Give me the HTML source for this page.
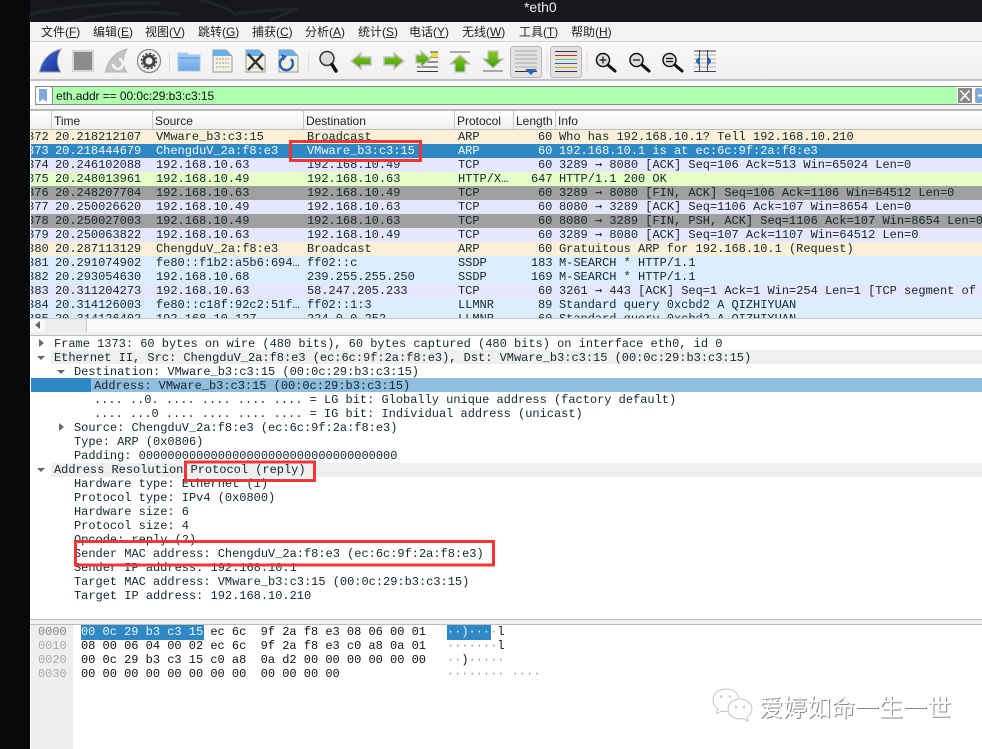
<!DOCTYPE html>
<html><head><meta charset="utf-8"><style>
html,body{margin:0;padding:0;background:#fff}
#w{position:relative;width:982px;height:749px;overflow:hidden;background:#fff;font-family:"Liberation Mono",monospace;font-size:12px;color:#12272e;letter-spacing:-.014px}
.a{position:absolute}
.t{position:absolute;white-space:pre;line-height:14px;height:14px}
.m{position:absolute;top:24px;font:12px/16px "Liberation Sans","Noto Sans CJK SC",sans-serif;color:#222;white-space:pre}
.h{position:absolute;top:111px;height:18px;font:12px/20px "Liberation Sans",sans-serif;color:#222;border-right:1px solid #c8c8c8;box-sizing:border-box;padding-left:2px;white-space:pre}
.r{position:absolute;left:31px;width:951px;height:14px;overflow:hidden}
.r span{position:absolute;top:0;line-height:14px;white-space:pre}
.r b{font:12px/1px "DejaVu Sans Mono",monospace}
svg{position:absolute;overflow:visible}
u{text-decoration:underline}
</style></head><body><div id="w">
<div class="a" style="left:0;top:0;width:30px;height:749px;background:#08090b"></div>
<div class="a" style="left:30px;top:0;width:952px;height:22px;background:#16181d"></div>
<svg style="left:30px;top:0" width="300" height="22"><path d="M0 14Q60 2 130 3M170 0Q195 6 205 14Q235 10 268 9L240 20M40 22Q90 8 150 14" fill="none" stroke="#21242a" stroke-width="3"/></svg>
<div class="t" style="left:524px;top:0;font:14px/15px 'Liberation Sans',sans-serif;color:#eee">*eth0</div>
<div class="a" style="left:30px;top:22px;width:952px;height:20px;background:#f3f3f3;border-bottom:1px solid #d2d2d2;box-sizing:border-box"></div>
<div class="m" style="left:41px">文件(<u>F</u>)</div><div class="m" style="left:93px">编辑(<u>E</u>)</div><div class="m" style="left:145px">视图(<u>V</u>)</div><div class="m" style="left:198px">跳转(<u>G</u>)</div><div class="m" style="left:252px">捕获(<u>C</u>)</div><div class="m" style="left:305px">分析(<u>A</u>)</div><div class="m" style="left:358px">统计(<u>S</u>)</div><div class="m" style="left:409px">电话(<u>Y</u>)</div><div class="m" style="left:462px">无线(<u>W</u>)</div><div class="m" style="left:519px">工具(<u>T</u>)</div><div class="m" style="left:571px">帮助(<u>H</u>)</div>
<div class="a" style="left:30px;top:42px;width:952px;height:39px;background:linear-gradient(#f8f8f8,#f0f0f0);border-bottom:2px solid #c2c2c2;box-sizing:border-box"></div>
<svg style="left:0;top:0" width="982" height="85" fill="none">
<defs><linearGradient id="g" x1="0" y1="0" x2="0" y2="1"><stop offset="0" stop-color="#8ccb28"/><stop offset="1" stop-color="#3d9a08"/></linearGradient>
<linearGradient id="f" x1="0" y1="0" x2="0" y2="1"><stop offset="0" stop-color="#a4cdf5"/><stop offset="1" stop-color="#6aa6e4"/></linearGradient>
<linearGradient id="b" x1="0" y1="0" x2="1" y2="1"><stop offset="0" stop-color="#3c6fd8"/><stop offset="1" stop-color="#1a2f95"/></linearGradient></defs>
<path d="M39.5 72Q43 54 61 49Q54 60 60.5 72Z" fill="url(#b)" stroke="#9aa0b0"/>
<rect x="73" y="51" width="20" height="20" fill="#8c8c8c" stroke="#d6d6d6" stroke-width="2"/>
<path d="M105.5 72Q109 54 127 49Q120 60 126.500 72Z" fill="#c4c4c4" stroke="#b4b4b4"/><path d="M119 59a5 5 0 1 1-6 5" stroke="#f6f6f6" stroke-width="2.500"/>
<circle cx="149" cy="61" r="11.500" fill="#f4f4f4" stroke="#8a8a8a" stroke-width="1.300"/><circle cx="149" cy="61" r="5" stroke="#444" stroke-width="3"/><circle cx="149" cy="61" r="7.500" stroke="#444" stroke-width="1.500" stroke-dasharray="2.400 1.500"/>
<path d="M169.500 52V71M308.500 52V71" stroke="#dcdcdc"/>
<path d="M178 71V53H187L189 55H200V71Z" fill="url(#f)" stroke="#a8c8e8"/><path d="M178 58H200" stroke="#5a96d8"/>
<path d="M213 50H226L232 56V72H213Z" fill="#f4f2df" stroke="#999"/><path d="M213 50H226L232 56H213Z" fill="#6ab0e6"/><path d="M216 59H229M216 63H229M216 67H229" stroke="#999" stroke-dasharray="2 1"/>
<path d="M246 50H259L265 56V72H246Z" fill="#f4f2df" stroke="#999"/><path d="M246 50H259L265 56H246Z" fill="#6ab0e6"/><path d="M249 68H262" stroke="#999" stroke-dasharray="2 1"/><path d="M248 54L263 70M263 54L248 70" stroke="#333" stroke-width="2.500"/>
<path d="M279 50H292L298 56V72H279Z" fill="#f4f2df" stroke="#999"/><path d="M279 50H292L298 56H279Z" fill="#6ab0e6"/><path d="M291 59A6.500 6.500 0 1 1 283 58" stroke="#2a62b8" stroke-width="2.500"/><path d="M281 54L287 56L283 61Z" fill="#2a62b8"/>
<circle cx="327" cy="58.500" r="7" fill="#dcdcdc" stroke="#333" stroke-width="1.500"/><path d="M332 64.500L336 71" stroke="#111" stroke-width="3.500" stroke-linecap="round"/>
<path d="M351 61L361 53V57H371V65H361V69Z" fill="url(#g)" stroke="#c4c4c4" stroke-width="1.500"/>
<path d="M404 61L394 53V57H384V65H394V69Z" fill="url(#g)" stroke="#c4c4c4" stroke-width="1.500"/>
<path d="M430 52H438M430 57H438M417 62H438M417 67H438M417 71.500H438" stroke="#333"/><rect x="431" y="53" width="7" height="4" fill="#f6dc3c"/><path d="M430 59L421 51V55H416V63H421V67Z" fill="url(#g)" stroke="#c4c4c4" stroke-width="1.200"/>
<path d="M450 52H470" stroke="#aaa" stroke-width="2"/><path d="M460 55L470 64H465V72H455V64H450Z" fill="url(#g)" stroke="#c4c4c4" stroke-width="1.200"/>
<path d="M483 71H503" stroke="#aaa" stroke-width="2"/><path d="M493 68L503 59H498V51H488V59H483Z" fill="url(#g)" stroke="#c4c4c4" stroke-width="1.200"/>
<rect x="510.500" y="46.500" width="31" height="31" rx="3" fill="#e2e2e2" stroke="#b8b8b8"/><path d="M515 51H537M515 55H537M515 59H537M515 63H537M515 67H537" stroke="#aaa"/><path d="M515 71.500H537" stroke="#333"/><path d="M525 69H537L531 75Z" fill="#2a66b4"/>
<rect x="550.500" y="46.500" width="31" height="31" rx="3" fill="#e2e2e2" stroke="#b8b8b8"/><path d="M555 51.500H577" stroke="#333"/><path d="M555 55.500H577" stroke="#d42a2a"/><path d="M555 59.500H577" stroke="#78c030"/><path d="M555 63.500H577" stroke="#3060c0"/><path d="M555 67.500H577" stroke="#d0a010"/><path d="M555 71.500H577" stroke="#333"/>
<path d="M547 53V72M587 53V72" stroke="#dcdcdc"/>
<g stroke="#111" fill="#ddd"><circle cx="603" cy="60" r="6.500" stroke-width="1.500"/><circle cx="636.500" cy="60" r="6.500" stroke-width="1.500"/><circle cx="669.500" cy="60" r="6.500" stroke-width="1.500"/></g>
<path d="M608 65L615 71M642 65L649 71M675 65L682 71" stroke="#111" stroke-width="3" stroke-linecap="round"/>
<path d="M599.500 60H606.500M603 56.500V63.500M633 60H640M666 58.500H673M666 61.500H673" stroke="#111" stroke-width="1.200"/>
<path d="M694 51H716M694 55H716M694 59H716M694 63H716M694 67H716M694 71.500H716" stroke="#b0b0b0"/><path d="M694 51H716M694 71.500H716M699.500 50V72M707.500 50V72" stroke="#444"/><path d="M696 60L700 56V66L696 62ZM711 60L707.500 56V66L711 62Z" fill="#2a66b4"/>
</svg>
<div class="a" style="left:35px;top:86px;width:947px;height:19px;background:#afffaf;border-top:1px solid #8a8a8a;border-bottom:1px solid #8a8a8a;box-sizing:border-box"></div>
<div class="a" style="left:35px;top:86px;width:18px;height:19px;background:#fff;border:1px solid #8a8a8a;border-radius:3px;box-sizing:border-box"></div>
<svg style="left:39px;top:89px" width="10" height="14"><path d="M0 0H8V13L4 10L0 13Z" fill="#7fa9d8"/></svg>
<div class="t" style="left:56px;top:88px;font:12px/16px 'Liberation Sans',sans-serif;color:#111;height:16px;letter-spacing:-.07px">eth.addr == 00:0c:29:b3:c3:15</div>
<div class="a" style="left:957px;top:87px;width:25px;height:17px;background:#fff"></div>
<svg style="left:958px;top:88px" width="24" height="15"><rect width="14" height="15" fill="#8a8a8a"/><path d="M2.500 2.500L11.500 12.500M11.500 2.500L2.500 12.500" stroke="#fff" stroke-width="1.500"/><rect x="17" width="7" height="15" rx="2" fill="#7fa9d8"/><path d="M20 7.500H24" stroke="#fff" stroke-width="2"/></svg>
<div class="a" style="left:30px;top:105px;width:952px;height:5px;background:#f3f3f3"></div>
<div class="a" style="left:30px;top:109px;width:952px;height:2px;background:#b8b8b8"></div>
<div class="a" style="left:30px;top:111px;width:952px;height:18px;background:linear-gradient(#fff,#efefef)"></div>
<div class="h" style="left:31px;width:21px"></div><div class="h" style="left:52px;width:101px">Time</div><div class="h" style="left:153px;width:151px">Source</div><div class="h" style="left:304px;width:151px">Destination</div><div class="h" style="left:455px;width:59px">Protocol</div><div class="h" style="left:514px;width:42px">Length</div><div class="h" style="left:556px;width:426px;border:0">Info</div>
<div class="a" style="left:30px;top:129px;width:952px;height:1px;background:#bdbdbd"></div>
<div class="r" style="top:130px;background:#faf0d7"><span style="left:-11px">1372</span><span style="left:24px">20.218212107</span><span style="left:125px">VMware_b3:c3:15</span><span style="left:276px">Broadcast</span><span style="left:427px">ARP</span><span style="left:507px">60</span><span style="left:528px">Who has 192.168.10.1? Tell 192.168.10.210</span></div>
<div class="r" style="top:144px;background:#2e88c4;color:#f4f8fc"><span style="left:-11px">1373</span><span style="left:24px">20.218444679</span><span style="left:125px">ChengduV_2a:f8:e3</span><span style="left:276px">VMware_b3:c3:15</span><span style="left:427px">ARP</span><span style="left:507px">60</span><span style="left:528px">192.168.10.1 is at ec:6c:9f:2a:f8:e3</span></div>
<div class="r" style="top:158px;background:#e7e6ff"><span style="left:-11px">1374</span><span style="left:24px">20.246102088</span><span style="left:125px">192.168.10.63</span><span style="left:276px">192.168.10.49</span><span style="left:427px">TCP</span><span style="left:507px">60</span><span style="left:528px">3289 <b>→</b> 8080 [ACK] Seq=106 Ack=513 Win=65024 Len=0</span></div>
<div class="r" style="top:172px;background:#e4ffc7"><span style="left:-11px">1375</span><span style="left:24px">20.248013961</span><span style="left:125px">192.168.10.49</span><span style="left:276px">192.168.10.63</span><span style="left:427px">HTTP/X…</span><span style="left:500px">647</span><span style="left:528px">HTTP/1.1 200 OK</span></div>
<div class="r" style="top:186px;background:#a0a0a0"><span style="left:-11px">1376</span><span style="left:24px">20.248207704</span><span style="left:125px">192.168.10.63</span><span style="left:276px">192.168.10.49</span><span style="left:427px">TCP</span><span style="left:507px">60</span><span style="left:528px">3289 <b>→</b> 8080 [FIN, ACK] Seq=106 Ack=1106 Win=64512 Len=0</span></div>
<div class="r" style="top:200px;background:#e7e6ff"><span style="left:-11px">1377</span><span style="left:24px">20.250026620</span><span style="left:125px">192.168.10.49</span><span style="left:276px">192.168.10.63</span><span style="left:427px">TCP</span><span style="left:507px">60</span><span style="left:528px">8080 <b>→</b> 3289 [ACK] Seq=1106 Ack=107 Win=8654 Len=0</span></div>
<div class="r" style="top:214px;background:#a0a0a0"><span style="left:-11px">1378</span><span style="left:24px">20.250027003</span><span style="left:125px">192.168.10.49</span><span style="left:276px">192.168.10.63</span><span style="left:427px">TCP</span><span style="left:507px">60</span><span style="left:528px">8080 <b>→</b> 3289 [FIN, PSH, ACK] Seq=1106 Ack=107 Win=8654 Len=0</span></div>
<div class="r" style="top:228px;background:#e7e6ff"><span style="left:-11px">1379</span><span style="left:24px">20.250063822</span><span style="left:125px">192.168.10.63</span><span style="left:276px">192.168.10.49</span><span style="left:427px">TCP</span><span style="left:507px">60</span><span style="left:528px">3289 <b>→</b> 8080 [ACK] Seq=107 Ack=1107 Win=64512 Len=0</span></div>
<div class="r" style="top:242px;background:#faf0d7"><span style="left:-11px">1380</span><span style="left:24px">20.287113129</span><span style="left:125px">ChengduV_2a:f8:e3</span><span style="left:276px">Broadcast</span><span style="left:427px">ARP</span><span style="left:507px">60</span><span style="left:528px">Gratuitous ARP for 192.168.10.1 (Request)</span></div>
<div class="r" style="top:256px;background:#daeeff"><span style="left:-11px">1381</span><span style="left:24px">20.291074902</span><span style="left:125px">fe80::f1b2:a5b6:694…</span><span style="left:276px">ff02::c</span><span style="left:427px">SSDP</span><span style="left:500px">183</span><span style="left:528px">M-SEARCH * HTTP/1.1</span></div>
<div class="r" style="top:270px;background:#daeeff"><span style="left:-11px">1382</span><span style="left:24px">20.293054630</span><span style="left:125px">192.168.10.68</span><span style="left:276px">239.255.255.250</span><span style="left:427px">SSDP</span><span style="left:500px">169</span><span style="left:528px">M-SEARCH * HTTP/1.1</span></div>
<div class="r" style="top:284px;background:#e7e6ff"><span style="left:-11px">1383</span><span style="left:24px">20.311204273</span><span style="left:125px">192.168.10.63</span><span style="left:276px">58.247.205.233</span><span style="left:427px">TCP</span><span style="left:507px">60</span><span style="left:528px">3261 <b>→</b> 443 [ACK] Seq=1 Ack=1 Win=254 Len=1 [TCP segment of a reassembled PDU]</span></div>
<div class="r" style="top:298px;background:#daeeff"><span style="left:-11px">1384</span><span style="left:24px">20.314126003</span><span style="left:125px">fe80::c18f:92c2:51f…</span><span style="left:276px">ff02::1:3</span><span style="left:427px">LLMNR</span><span style="left:507px">89</span><span style="left:528px">Standard query 0xcbd2 A QIZHIYUAN</span></div>
<div class="r" style="top:312px;height:6px;background:#daeeff"><span style="left:-11px">1385</span><span style="left:24px">20.314126402</span><span style="left:125px">192.168.10.127</span><span style="left:276px">224.0.0.252</span><span style="left:427px">LLMNR</span><span style="left:507px">60</span><span style="left:528px">Standard query 0xcbd2 A QIZHIYUAN</span></div>
<div class="a" style="left:30px;top:318px;width:952px;height:14px;background:#f8f8f8;border-top:1px solid #c8c8c8;box-sizing:border-box"></div>
<div class="a" style="left:45px;top:319px;width:41px;height:13px;background:#ececec;border-right:1px solid #ccc"></div>
<svg style="left:35px;top:321px" width="6" height="9"><path d="M5 0V8L0 4Z" fill="#666"/></svg>
<div class="a" style="left:30px;top:332px;width:952px;height:4px;background:#efefef;border-bottom:1px solid #bdbdbd;box-sizing:border-box"></div>
<div class="a" style="left:51px;top:350px;width:931px;height:14px;background:#efefef"></div>
<div class="a" style="left:51px;top:463px;width:931px;height:14px;background:#efefef"></div>
<div class="a" style="left:31px;top:378px;width:60px;height:14px;background:#2e88c4"></div>
<div class="a" style="left:91px;top:378px;width:891px;height:14px;background:#92bedd"></div>
<svg style="left:0;top:0" width="100" height="480"><path d="M39 339L44 343L39 347ZM59 423L64 427L59 431Z" fill="#666"/><path d="M37 356L45 356L41 360ZM57 370L65 370L61 374ZM37 468L45 468L41 472Z" fill="#666"/></svg>
<div class="t" style="left:54px;top:337px">Frame 1373: 60 bytes on wire (480 bits), 60 bytes captured (480 bits) on interface eth0, id 0</div>
<div class="t" style="left:54px;top:351px">Ethernet II, Src: ChengduV_2a:f8:e3 (ec:6c:9f:2a:f8:e3), Dst: VMware_b3:c3:15 (00:0c:29:b3:c3:15)</div>
<div class="t" style="left:74px;top:365px">Destination: VMware_b3:c3:15 (00:0c:29:b3:c3:15)</div>
<div class="t" style="left:94px;top:379px">Address: VMware_b3:c3:15 (00:0c:29:b3:c3:15)</div>
<div class="t" style="left:94px;top:393px">.... ..0. .... .... .... .... = LG bit: Globally unique address (factory default)</div>
<div class="t" style="left:94px;top:407px">.... ...0 .... .... .... .... = IG bit: Individual address (unicast)</div>
<div class="t" style="left:74px;top:421px">Source: ChengduV_2a:f8:e3 (ec:6c:9f:2a:f8:e3)</div>
<div class="t" style="left:74px;top:435px">Type: ARP (0x0806)</div>
<div class="t" style="left:74px;top:449px">Padding: 000000000000000000000000000000000000</div>
<div class="t" style="left:54px;top:463px">Address Resolution Protocol (reply)</div>
<div class="t" style="left:74px;top:477px">Hardware type: Ethernet (1)</div>
<div class="t" style="left:74px;top:491px">Protocol type: IPv4 (0x0800)</div>
<div class="t" style="left:74px;top:505px">Hardware size: 6</div>
<div class="t" style="left:74px;top:519px">Protocol size: 4</div>
<div class="t" style="left:74px;top:533px">Opcode: reply (2)</div>
<div class="t" style="left:74px;top:547px">Sender MAC address: ChengduV_2a:f8:e3 (ec:6c:9f:2a:f8:e3)</div>
<div class="t" style="left:74px;top:561px">Sender IP address: 192.168.10.1</div>
<div class="t" style="left:74px;top:575px">Target MAC address: VMware_b3:c3:15 (00:0c:29:b3:c3:15)</div>
<div class="t" style="left:74px;top:589px">Target IP address: 192.168.10.210</div>
<div class="a" style="left:30px;top:619px;width:952px;height:6px;background:#f2f2f2;border-top:1px solid #bdbdbd;border-bottom:1px solid #bdbdbd;box-sizing:border-box"></div>
<div class="a" style="left:31px;top:625px;width:42px;height:124px;background:#eee"></div>
<div class="a" style="left:81px;top:625px;width:123px;height:15px;background:#2e88c4"></div>
<div class="a" style="left:447px;top:625px;width:44px;height:15px;background:#2e88c4"></div>
<div class="t" style="left:38px;top:625px;color:#888">0000</div><div class="t" style="left:38px;top:639px;color:#aaa">0010</div><div class="t" style="left:38px;top:653px;color:#aaa">0020</div><div class="t" style="left:38px;top:667px;color:#aaa">0030</div>
<div class="t" style="left:81px;top:625px;color:#111"><span style="color:#eaf4fb">00 0c 29 b3 c3 15</span> ec 6c  9f 2a f8 e3 08 06 00 01</div>
<div class="t" style="left:81px;top:639px;color:#111">08 00 06 04 00 02 ec 6c  9f 2a f8 e3 c0 a8 0a 01</div>
<div class="t" style="left:81px;top:653px;color:#111">00 0c 29 b3 c3 15 c0 a8  0a d2 00 00 00 00 00 00</div>
<div class="t" style="left:81px;top:667px;color:#111">00 00 00 00 00 00 00 00  00 00 00 00</div>
<div class="t" style="left:447px;top:625px;color:#999"><span style="color:#eaf4fb">··)···</span>·<span style="color:#111">l</span></div>
<div class="t" style="left:447px;top:639px;color:#999">·······<span style="color:#111">l</span></div>
<div class="t" style="left:447px;top:653px;color:#999">··<span style="color:#111">)</span>·····</div>
<div class="t" style="left:447px;top:667px;color:#999">········ ····</div>
<svg style="left:0;top:0;pointer-events:none" width="982" height="749" fill="none" stroke="#f33535" stroke-width="3">
<rect x="290.500" y="141.500" width="130" height="19"/><rect x="185.500" y="462" width="129" height="18.500"/><rect x="75.500" y="541.500" width="418" height="23.500"/>
</svg>
<svg style="left:712px;top:688px" width="40" height="34" fill="#fff" stroke="#c4c4c4" stroke-width="1"><path d="M14 1C6 1 1 6 1 12C1 16 3 19 6 21L4.500 25.500L10 23C11 23.300 12 23.500 14 23.500C23 23.500 27 18 27 12C27 6 22 1 14 1Z"/><path d="M28 11C21 11 16 15.500 16 21C16 26.500 21 31 28 31C29 31 30 30.800 31 30.500L36 33L35 29C38 27 40 24 40 21C40 15.500 35 11 28 11Z"/><circle cx="9" cy="8.500" r=".8"/><circle cx="18" cy="8.500" r=".8"/><circle cx="24" cy="19" r=".8"/><circle cx="32" cy="19" r=".8"/></svg>
<div class="t" style="left:759px;top:693px;height:26px;font:24px/26px 'Noto Sans CJK SC',sans-serif;color:#fff;text-shadow:1px 1px 0 #8a8a8a">爱婷如命一生一世</div>
</div></body></html>
